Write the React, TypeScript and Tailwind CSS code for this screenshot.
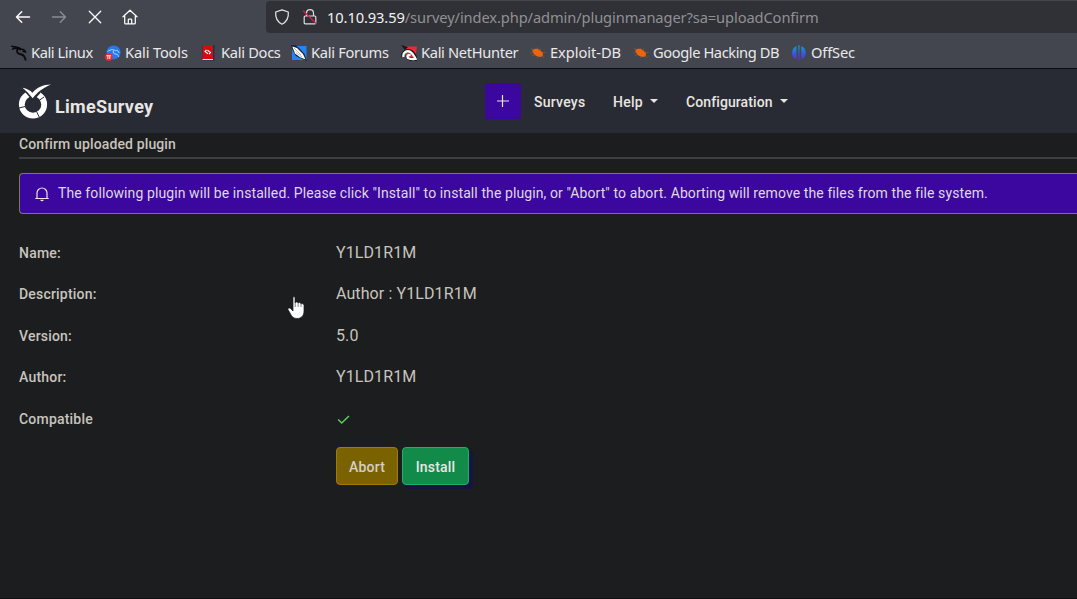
import React from "react";

const Dragon = ({ color, className = "" }: { color: string; className?: string }) => (
  <svg viewBox="0 0 16 16" className={"size-4 " + className} fill="none" stroke={color}>
    <path d="M0 1.2 L5 1.8 C7.5 2.2 9.5 3 10.5 4.5 M1 4.5 C4 3 7.5 3.5 9.5 5 M1.5 3 L6 2.5" strokeWidth="1.2" />
    <path d="M7 3.5 C5 6 6 8.8 9.5 9.2 C12.5 9.5 14 11.5 14.8 15.5" strokeWidth="1.9" />
    <path d="M9 4.5 C11 4 13.5 4.5 14.5 7 L11.5 6.2" strokeWidth="1.4" />
  </svg>
);

const ToolsIcon = () => (
  <svg viewBox="0 0 16 16" className="size-4">
    <circle cx="8.6" cy="7.4" r="7" fill="#2878f0" />
    <path d="M2.5 6.5 C6 4 9 4.300 10.5 6 M8.5 5.5 C7.500 8 9 9 11 9 C13 9.500 13.6 11 13.8 12 M10.500 5.500 C12.5 5 14 6.5 14 8" fill="none" stroke="#c4dcff" strokeWidth=".9" />
    <circle cx="3.8" cy="12" r="3.8" fill="#ee2b2b" />
    <path d="M1.5 10.7h4.6M2.9 10.7v3.3M4.800 10.7v3.3" stroke="#fff" strokeWidth=".9" />
  </svg>
);

const DocsIcon = () => (
  <svg viewBox="0 0 16 16" className="size-4">
    <rect x="1" y="0" width="12.5" height="15.5" fill="#17325c" />
    <path d="M1.500 0h10.500v14H1.500z" fill="#d40c10" />
    <path d="M1.500 14h10.500v1H1.500z" fill="#e8e8e8" />
    <path d="M5.500 5 L4 6.500 L7 8.700 M6.500 5.300 L9.500 7.500 L8 9" stroke="#fff" strokeWidth="1.1" fill="none" />
  </svg>
);

const ForumsIcon = () => (
  <svg viewBox="0 0 16 16" className="size-4">
    <path d="M1 1h14.5v14H1z" fill="#2484f5" />
    <path d="M0 0 L5 .5 L9 4 L13.5 9 L16 16 L11 14 L5 11 L1.500 5z" fill="#1b2028" />
    <path d="M1.3 1.5 L6 3 L12 9 L14.500 14.500 L9 12.300 L4 8.500z" fill="#fff" />
    <path d="M3 3 L10 10 M5 7.500l6 4.500" stroke="#8e9298" strokeWidth=".6" />
  </svg>
);

const NetHunterIcon = () => (
  <svg viewBox="0 0 16 16" className="size-4">
    <path d="M4 1.500h12l-2 13-9-3z" fill="#ef2636" />
    <path d="M0 0l7 2-3 3z" fill="#16181c" />
    <path d="M2 12 C1 7 6 4.500 10 6.500 C13 8 14 11 15 14.5 C11 15 6.500 14 6.500 11" fill="none" stroke="#17181b" strokeWidth="3.4" />
    <path d="M2.500 12 C1.500 7.500 6 5 9.5 7 C12 8.500 13 11 14.5 13.800 C10 14.8 6 13.600 6.500 11.200 C7 9.900 8.500 9.800 9.600 10.500" fill="none" stroke="#fff" strokeWidth="2.300" />
  </svg>
);

const BugIcon = () => (
  <svg viewBox="0 0 16 16" className="size-4">
    <path d="M2.3 5.4 C4 3 8 3.200 10.3 5.5 L12.8 7.8 L13 10.5 L11.3 11.8 C8 12.400 4.5 10.400 3.2 8z" fill="#ee640c" />
    <path d="M4 4.500 L1 3.8 M8 4 L7.2 2.500 M10.3 5.500 L10.8 3.500 M3.5 7.5 L.5 7.8 M5 9.5 L2 11 M8 11 L7.5 13 M12 7.500 L15.5 7.500 M12 10.5 L14 13" stroke="#94583a" strokeWidth=".7" />
  </svg>
);

const OffSecIcon = () => (
  <svg viewBox="0 0 16 16" className="size-4">
    <defs>
      <linearGradient id="offsec" x1="0" y1="0" x2="0" y2="1">
        <stop offset="0" stopColor="#12a9be" />
        <stop offset=".5" stopColor="#355ddc" />
        <stop offset="1" stopColor="#6526cf" />
      </linearGradient>
    </defs>
    <path d="M5.500 1.200 A7.2 7.2 0 0 0 5.500 14.500z M7.300 .2h1.2v15.6H7.3z M10.300 1.200 A7.2 7.2 0 0 1 10.300 14.500z" fill="url(#offsec)" />
  </svg>
);

const bookmarks = [
  { label: "Kali Linux", icon: <Dragon color="#090a0c" />, box: "w-[94px] tracking-[-0.42px]" },
  { label: "Kali Tools", icon: <ToolsIcon />, box: "w-[96px] tracking-[-0.15px]" },
  { label: "Kali Docs", icon: <DocsIcon />, box: "w-[90px] tracking-[-0.3px]" },
  { label: "Kali Forums", icon: <ForumsIcon />, box: "w-[110px] tracking-[-0.3px]" },
  { label: "Kali NetHunter", icon: <NetHunterIcon />, box: "w-[129px] tracking-[-0.33px]" },
  { label: "Exploit-DB", icon: <BugIcon />, box: "w-[103px] tracking-[-0.05px]" },
  { label: "Google Hacking DB", icon: <BugIcon />, box: "w-[158px] tracking-[-0.41px]" },
  { label: "OffSec", icon: <OffSecIcon />, box: "w-[70px] tracking-[-0.15px]" },
];

function Browser() {
  return (
    <div className="h-[69px] border-b border-[#0c0c0f] bg-[#44464f] font-['Noto_Sans',sans-serif] text-[#e9e9ea]">
      <div className="flex h-[34px] items-center pl-[15px]">
        <svg viewBox="0 0 16 16" className="size-4 shrink-0" fill="none" stroke="#fbfbfe" strokeWidth="1.5" strokeLinecap="round" strokeLinejoin="round"><path d="M14.5 8H1.5M6.7 2.8 1.5 8l5.2 5.2" /></svg>
        <svg viewBox="0 0 16 16" className="ml-5 size-4 shrink-0" fill="none" stroke="#8b8c93" strokeWidth="1.4" strokeLinecap="round" strokeLinejoin="round"><path d="M1.5 8h13M9.3 2.8 14.5 8l-5.2 5.2" /></svg>
        <svg viewBox="0 0 16 16" className="ml-5 size-4 shrink-0" fill="none" stroke="#fbfbfe" strokeWidth="1.3" strokeLinecap="round"><path d="m2.3 2.3 11.4 11.4M13.7 2.3 2.3 13.7" /></svg>
        <svg viewBox="0 0 16 16" className="ml-[19px] size-4 shrink-0" fill="none" stroke="#fbfbfe" strokeWidth="1.25" strokeLinecap="round" strokeLinejoin="round"><path d="M1 7.8 8 1.2l7 6.6M2.7 7v7q0 .9.9.9h8.8q.9 0 .9-.9V7M6.3 14.8v-4q0-.8.8-.8h1.8q.8 0 .8.8v4" /></svg>
        <div className="ml-[128px] flex h-8 flex-1 items-center rounded-l-[4px] bg-[#303136] pl-2">
          <svg viewBox="0 0 16 16" className="size-4 shrink-0" fill="none" stroke="#e4e4e6" strokeWidth="1.25" strokeLinejoin="round"><path d="M8 .8 14.3 3c.5 5.8-1.7 9.8-6.3 12.2C3.4 12.8 1.2 8.8 1.7 3z" /></svg>
          <svg viewBox="0 0 16 16" className="ml-3 size-4 shrink-0" fill="none" stroke="#dddde0" strokeWidth="1.2"><path d="M4.5 7V4.2a3.5 3.5 0 0 1 7 0V7M3.2 7h9.6q1 0 1 1v5.8q0 1-1 1H3.2q-1 0-1-1V8q0-1 1-1z" /><path d="m1.2 1.7 13.2 13.2" stroke="#d91f4e" strokeWidth="1.3" /></svg>
          <span className="ml-[9px] whitespace-nowrap text-[14.67px] tracking-[-0.1px] text-[#909094]"><span className="text-[#f1f1f3]">10.10.93.59</span>/survey/index.php/admin/pluginmanager?sa=uploadConfirm</span>
        </div>
      </div>
      <div className="flex h-[34px] items-center pl-[11px] pt-1">
        {bookmarks.map((b) => (
          <div key={b.label} className={"flex shrink-0 items-center gap-1 whitespace-nowrap text-[14.67px] " + b.box}>
            <span className="shrink-0">{b.icon}</span><span className="pb-0.5">{b.label}</span>
          </div>
        ))}
      </div>
    </div>
  );
}

const Caret = () => <span className="mb-0.5 ml-[7px] size-0 border-x-4 border-t-4 border-x-transparent border-t-[#e8e6e3]" />;

function Header() {
  return (
    <header className="flex h-16 bg-[#282b33] text-[#e8e6e3]">
      <div className="flex w-[485px] pl-[18px]">
        <svg viewBox="0 0 34 36" className="mt-[14px] h-9 w-[34px] shrink-0">
          <circle cx="15" cy="21.500" r="11.2" fill="none" stroke="#fff" strokeWidth="5.8" />
          <path d="M7.500 9.500 L15 18 L22.500 10 L20 5H6z" fill="#282b33" />
          <path d="M4.500 4.800 C9 5.500 12 7.500 14.5 9.800 C19 4.500 25 1.800 33 1.600 C25 5 19.5 9 14.7 15.300 C11.500 11.500 8.500 8 4.500 4.800z" fill="#fff" />
          <path d="M21 17.500l5-3.500M1 25l6-1.500M18.500 28.500l3 6" stroke="#282b33" strokeWidth="1" />
        </svg>
        <span className="ml-[3px] mt-[24px] text-[18px] font-bold leading-[27px] tracking-[.3px]">LimeSurvey</span>
      </div>
      <nav className="flex h-[51px] pt-[14px] text-[14px] font-medium leading-9">
        <button className="flex h-9 w-9 items-center justify-center rounded-[3px] bg-[#3c079f]">
          <svg viewBox="0 0 12 12" className="mr-px size-3" stroke="#e8e6e3" strokeWidth="1.2"><path d="M5.500 0v12M0 6h12" /></svg>
        </button>
        <span className="ml-[13px] mt-px w-[79px] tracking-[.25px]">Surveys</span>
        <span className="mt-px flex h-9 w-[73px] items-center tracking-[.25px]">Help<Caret /></span>
        <span className="mt-px flex h-9 items-center tracking-[.1px]">Configuration<Caret /></span>
      </nav>
    </header>
  );
}

const rows = [
  ["Name:", "Y1LD1R1M"],
  ["Description:", "Author : Y1LD1R1M"],
  ["Version:", "5.0"],
  ["Author:", "Y1LD1R1M"],
  ["Compatible", ""],
];

export default function App() {
  return (
    <div className="relative flex h-[599px] w-[1077px] flex-col overflow-hidden border-b border-[#111215] bg-[#1c1d1f] font-['Roboto',sans-serif] text-[#c8c4bd]">
      <Browser />
      <Header />
      <main className="pl-[19px]">
        <h1 className="h-[26px] border-b-2 border-[#3c3f41] text-[14px] font-medium leading-[22px] tracking-[.13px]">Confirm uploaded plugin</h1>
        <div className="mt-[14px] flex h-[41px] items-center rounded-l-[4px] border border-r-0 border-[#827568] bg-[#3c079f] pl-[15px] text-[14px] tracking-[.097px] text-[#dfd8e5]">
          <svg viewBox="0 0 14 16" className="mt-px h-4 w-[14px] shrink-0" fill="none" stroke="#e8e6e3" strokeWidth="1.2"><path d="M.3 12.5h13.400M2 12V7a5 5 0 0 1 10 0v5" /><path d="M5.3 13.7a1.7 1.5 0 0 0 3.4 0z" fill="#e8e6e3" stroke="none" /></svg>
          <span className="ml-[9px] whitespace-nowrap">The following plugin will be installed. Please click "Install" to install the plugin, or "Abort" to abort. Aborting will remove the files from the file system.</span>
        </div>
        <div className="mt-[18px]">
          {rows.map(([label, value]) => (
            <div key={label} className="flex h-[41.5px] items-center">
              <span className="w-[317px] pt-px text-[14px] font-medium tracking-[.2px]">{label}</span>
              {value ? <span className="text-[16px] tracking-[.1px]">{value}</span> : (
                <svg viewBox="0 0 14 12" className="mt-0.5 h-3 w-[14px]" fill="none" stroke="#57d45f" strokeWidth="1.4"><path d="m2.200 5.5 3.500 3.500L13 2" /></svg>
              )}
            </div>
          ))}
        </div>
        <div className="ml-[317px] mt-[7.5px] flex gap-1 text-[14px] font-medium tracking-[.2px]">
          <button className="h-[38px] w-[62px] rounded-[4px] border border-[#9d7c00] bg-[#7b6200] pt-0.5 text-[#d3cfc9]">Abort</button>
          <button className="h-[38px] w-[67px] rounded-[4px] border border-[#1bb365] bg-[#128a4a] pt-0.5 text-[#e8e6e3] shadow-[4px_4px_0_#1a1243]">Install</button>
        </div>
      </main>
      <svg viewBox="0 0 18 24" className="absolute left-[287px] top-[296px] h-6 w-[18px]">
        <path d="M6 1.5C6 .5 8 .5 8 1.5V7C8.5 5.5 11 5.7 11 7C12 5.8 14 6.5 14 8C15 7 17 8 17 9.500V15C17 20 14 22.5 10 22.5C6 22.5 4.5 20 3 17L1 13.5C.5 12 3 11.5 4 13L6 15z" fill="#fff" stroke="#16171d" strokeWidth=".7" />
        <path d="M8.2 7v4M11.1 7v4M14 8v3" stroke="#25262c" strokeWidth=".6" />
      </svg>
    </div>
  );
}
